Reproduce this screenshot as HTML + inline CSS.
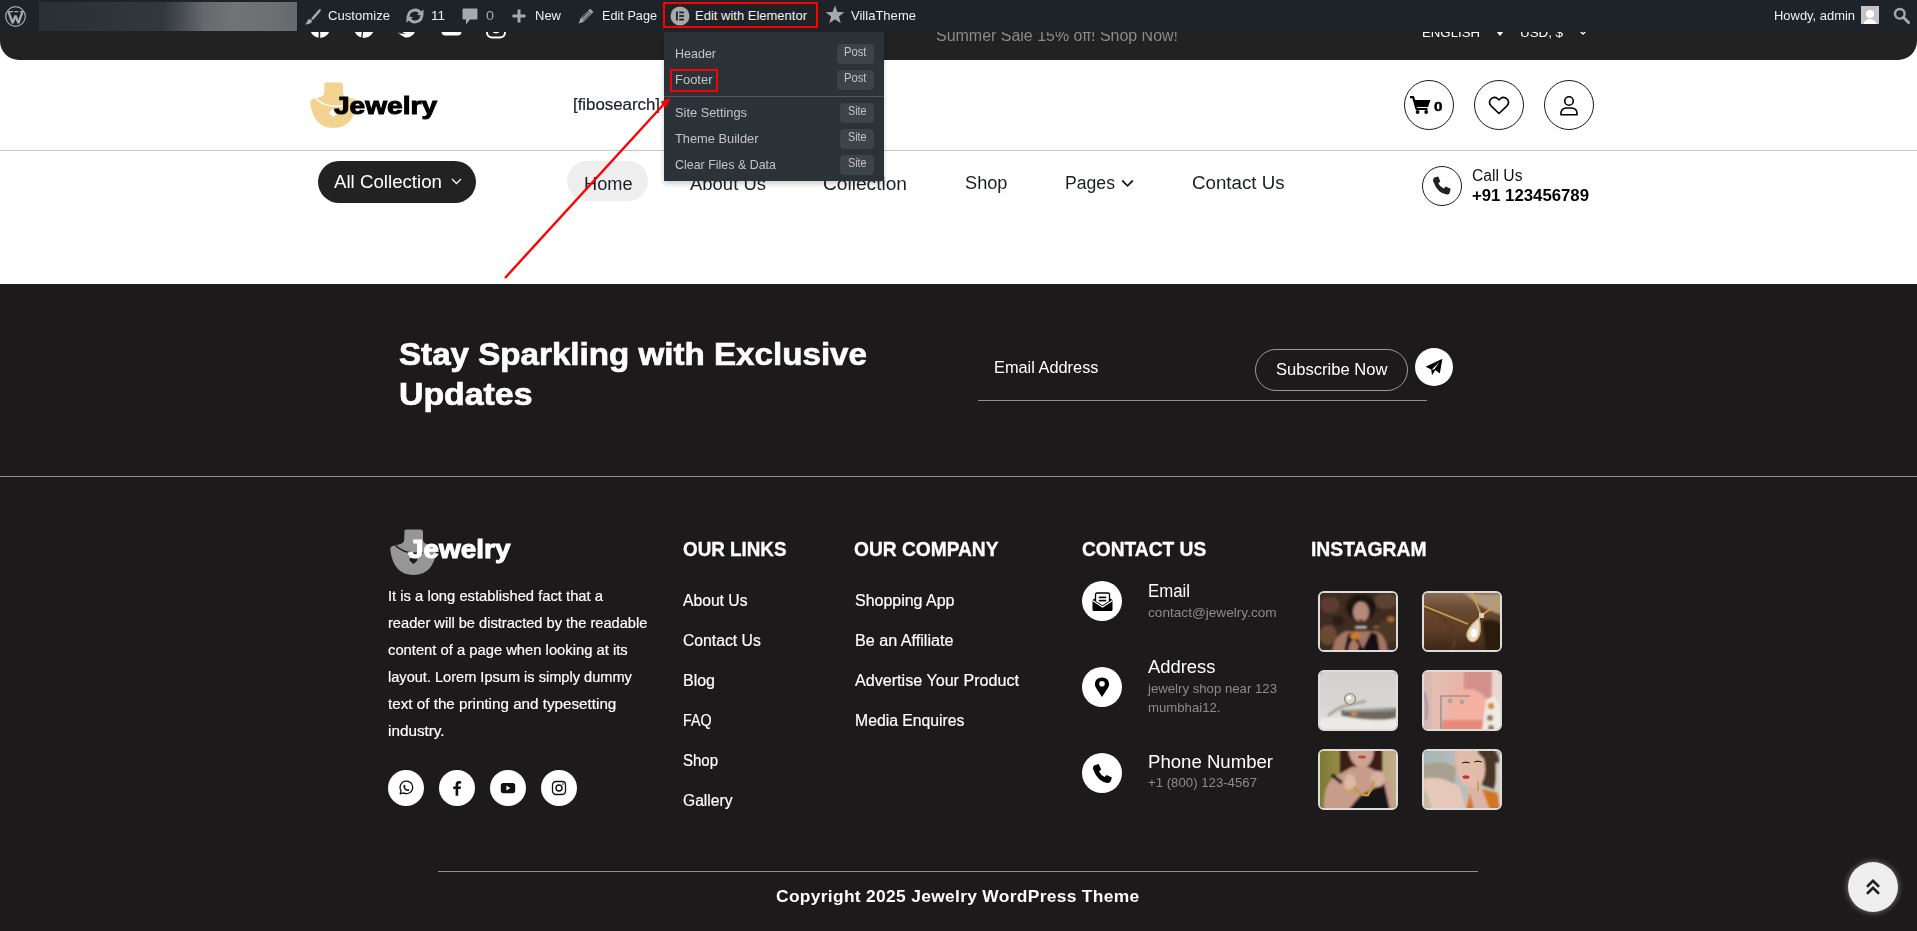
<!DOCTYPE html><html><head><meta charset="utf-8"><style>
*{margin:0;padding:0;box-sizing:border-box}
html,body{width:1917px;height:931px;overflow:hidden;background:#fff;font-family:"Liberation Sans", sans-serif}
.a{position:absolute}
.t{position:absolute;white-space:nowrap;line-height:1;transform-origin:0 50%}
#t0{transform:scaleX(0.9979)}#t1{transform:scaleX(1.0162)}#t2{transform:scaleX(1.0261)}#t3{transform:scaleX(1.0094)}#t4{transform:scaleX(1.0370)}#t5{transform:scaleX(1.1058)}#t6{transform:scaleX(0.9994)}#t7{transform:scaleX(0.9756)}#t8{transform:scaleX(1.0000)}#t9{transform:scaleX(1.0031)}#t10{transform:scaleX(0.9950)}#t11{transform:scaleX(1.1694)}#t12{transform:scaleX(1.0518)}#t13{transform:scaleX(1.2710)}#t14{transform:scaleX(1.0380)}#t15{transform:scaleX(1.0101)}#t16{transform:scaleX(1.0264)}#t17{transform:scaleX(1.0627)}#t18{transform:scaleX(1.0108)}#t19{transform:scaleX(0.9795)}#t20{transform:scaleX(1.0388)}#t21{transform:scaleX(0.9794)}#t22{transform:scaleX(1.0477)}#t23{transform:scaleX(0.9615)}#t24{transform:scaleX(0.9327)}#t25{transform:scaleX(0.9979)}#t26{transform:scaleX(0.9327)}#t27{transform:scaleX(0.9863)}#t28{transform:scaleX(0.8991)}#t29{transform:scaleX(0.9876)}#t30{transform:scaleX(0.8991)}#t31{transform:scaleX(0.9575)}#t32{transform:scaleX(0.8991)}#t33{transform:scaleX(1.0694)}#t34{transform:scaleX(1.0915)}#t35{transform:scaleX(0.9616)}#t36{transform:scaleX(0.9753)}#t37{transform:scaleX(1.1172)}#t38{transform:scaleX(0.9841)}#t39{transform:scaleX(0.9752)}#t40{transform:scaleX(0.9843)}#t41{transform:scaleX(0.9717)}#t42{transform:scaleX(1.0140)}#t43{transform:scaleX(1.0184)}#t44{transform:scaleX(0.9409)}#t45{transform:scaleX(0.9585)}#t46{transform:scaleX(0.9581)}#t47{transform:scaleX(0.9655)}#t48{transform:scaleX(0.9801)}#t49{transform:scaleX(0.9831)}#t50{transform:scaleX(0.9990)}#t51{transform:scaleX(0.8902)}#t52{transform:scaleX(0.9365)}#t53{transform:scaleX(0.9766)}#t54{transform:scaleX(0.9984)}#t55{transform:scaleX(1.0096)}#t56{transform:scaleX(1.0076)}#t57{transform:scaleX(0.9850)}#t58{transform:scaleX(0.9330)}#t59{transform:scaleX(1.0482)}#t60{transform:scaleX(1.0220)}#t61{transform:scaleX(1.0141)}#t62{transform:scaleX(1.0133)}#t63{transform:scaleX(1.0324)}#t64{transform:scaleX(1.0154)}#t65{transform:scaleX(1.0239)}</style></head><body><div class="a" style="left:0px;top:0px;width:1917px;height:60px;background:#222222;border-radius:0 0 19px 19px;"></div>
<svg class="a" style="left:310px;top:18px;" width="20" height="21" viewBox="0 0 20 21"><circle cx="10" cy="10" r="10" fill="#fff"/><rect x="8.6" y="8" width="1.6" height="13" fill="#222"/></svg>
<svg class="a" style="left:354px;top:18px;" width="20" height="21" viewBox="0 0 20 21"><circle cx="10" cy="10" r="10" fill="#fff"/><path d="M9,10 L7.6,21" stroke="#222" stroke-width="1.3"/><path d="M9.5,13 q4,1 6,-3" stroke="#222" stroke-width="1.2" fill="none"/></svg>
<svg class="a" style="left:397px;top:18px;" width="18" height="21" viewBox="0 0 18 21"><path d="M0,13.6 Q3,17 8,19.4 Q13,20 16.4,16.6 Q17.6,15 17.8,13.6 Z" fill="#fff"/><path d="M0,14 Q4,16.6 9,16 Q6,15.4 5.6,14 Z" fill="#222"/></svg>
<svg class="a" style="left:441px;top:18px;" width="21" height="18" viewBox="0 0 21 18"><rect x="0.5" y="2" width="20" height="15.5" rx="4" fill="#fff"/></svg>
<svg class="a" style="left:486px;top:18px;" width="20" height="21" viewBox="0 0 20 21"><rect x="1" y="1" width="18" height="18.5" rx="5" fill="none" stroke="#fff" stroke-width="2"/><circle cx="10" cy="10.5" r="4" fill="none" stroke="#fff" stroke-width="2"/></svg>
<div class="t" id="t0" style="left:936.00px;top:28.45px;font-size:16px;color:#8a8a8a;font-weight:400;">Summer Sale 15% off! Shop Now!</div>
<div class="t" id="t1" style="left:1422.00px;top:25.69px;font-size:13px;color:#ffffff;font-weight:400;">ENGLISH</div>
<svg class="a" style="left:1496px;top:31px;" width="8" height="6" viewBox="0 0 8 6"><path d="M0,0 L8,0 L4,5 Z" fill="#fff"/></svg>
<div class="t" id="t2" style="left:1520.00px;top:25.69px;font-size:13px;color:#ffffff;font-weight:400;">USD, $</div>
<svg class="a" style="left:1578px;top:29px;" width="10" height="8" viewBox="0 0 10 8"><path d="M1,1 L5,5 L9,1" fill="none" stroke="#fff" stroke-width="1.3"/></svg>
<div class="a" style="left:0px;top:0px;width:1917px;height:32px;background:#1d2327;z-index:2;"></div>
<div class="a" style="left:0;top:0;width:1917px;height:32px;z-index:3">
<svg class="a" style="left:5px;top:6px;" width="21" height="21" viewBox="0 0 21 21"><circle cx="10.5" cy="10.5" r="9.8" fill="none" stroke="#a7aaad" stroke-width="1.2"/><path d="M3.6,6.2 L7.6,17 L10.5,9.6 L13.4,17 L17.4,6.2" fill="none" stroke="#a7aaad" stroke-width="2.3" stroke-linejoin="bevel"/><path d="M2.4,5.6 H8 M9.2,5.6 H13.2 M15,5.6 H19" stroke="#a7aaad" stroke-width="1.3"/></svg>
<div class="a" style="left:39px;top:2px;width:258px;height:29px;background:linear-gradient(90deg,#2a2f33 0%,#2f3438 30%,#33383c 48%,#4a4e52 56%,#66696c 64%,#717476 75%,#6e7173 88%,#66696c 100%);"></div>
<svg class="a" style="left:304px;top:8px;" width="18" height="17" viewBox="0 0 18 17"><path d="M16.5,1 Q17.5,2 16,4 L9,12 L7,10.5 L14.5,2 Q15.8,0.5 16.5,1 Z" fill="#a7aaad"/><path d="M6.2,11 L8.2,12.8 Q7.5,16.5 1,16.6 Q3,14.8 3.2,13 Q4,11 6.2,11 Z" fill="#a7aaad"/></svg>
<div class="t" id="t3" style="left:328.00px;top:9.19px;font-size:13px;color:#f0f0f1;font-weight:400;">Customize</div>
<svg class="a" style="left:405px;top:7px;" width="20" height="18" viewBox="0 0 20 18"><path d="M3.4,9 A6.6,6.2 0 0 1 15.6,6" fill="none" stroke="#a7aaad" stroke-width="2.8"/><path d="M18.6,2.6 L18.4,9.6 L12,7.4 Z" fill="#a7aaad"/><path d="M16.6,9 A6.6,6.2 0 0 1 4.4,12" fill="none" stroke="#a7aaad" stroke-width="2.8"/><path d="M1.4,15.4 L1.6,8.4 L8,10.6 Z" fill="#a7aaad"/></svg>
<div class="t" id="t4" style="left:431.00px;top:9.19px;font-size:13px;color:#f0f0f1;font-weight:400;">11</div>
<svg class="a" style="left:462px;top:8px;" width="16" height="17" viewBox="0 0 16 17"><path d="M1.5,0.5 H14.5 Q15.5,0.5 15.5,1.5 V10.5 Q15.5,11.5 14.5,11.5 H8 L4,16.5 V11.5 H1.5 Q0.5,11.5 0.5,10.5 V1.5 Q0.5,0.5 1.5,0.5 Z" fill="#a7aaad"/></svg>
<div class="t" id="t5" style="left:486.00px;top:9.19px;font-size:13px;color:#a7aaad;font-weight:400;">0</div>
<svg class="a" style="left:512px;top:9px;" width="14" height="14" viewBox="0 0 14 14"><rect x="5.5" y="0.5" width="3" height="13" fill="#a7aaad"/><rect x="0.5" y="5.5" width="13" height="3" fill="#a7aaad"/></svg>
<div class="t" id="t6" style="left:535.00px;top:9.19px;font-size:13px;color:#f0f0f1;font-weight:400;">New</div>
<svg class="a" style="left:578px;top:8px;" width="16" height="16" viewBox="0 0 16 16"><path d="M12.2,0.8 L15.4,4 L5.6,13.8 L0.8,15.4 L2.4,10.6 Z" fill="#a7aaad"/><path d="M3.6,10.8 L11.4,3 M5.2,12.4 L13,4.6" stroke="#1d2327" stroke-width="1"/></svg>
<div class="t" id="t7" style="left:602.00px;top:9.19px;font-size:13px;color:#f0f0f1;font-weight:400;">Edit Page</div>
<div class="a" style="left:663px;top:2px;width:155px;height:26px;border:2px solid #f00;"></div>
<svg class="a" style="left:670px;top:6px;" width="20" height="20" viewBox="0 0 20 20"><circle cx="10" cy="10" r="9.5" fill="#a7aaad"/><rect x="6" y="5.5" width="1.8" height="9" fill="#1d2327"/><rect x="9.2" y="5.5" width="4.8" height="1.8" fill="#1d2327"/><rect x="9.2" y="9.1" width="4.8" height="1.8" fill="#1d2327"/><rect x="9.2" y="12.7" width="4.8" height="1.8" fill="#1d2327"/></svg>
<div class="t" id="t8" style="left:695.00px;top:9.19px;font-size:13px;color:#f0f0f1;font-weight:400;">Edit with Elementor</div>
<svg class="a" style="left:825px;top:5px;" width="20" height="19" viewBox="0 0 20 19"><path d="M10,0.5 L12.4,7 L19.3,7.2 L13.9,11.4 L15.8,18.2 L10,14.3 L4.2,18.2 L6.1,11.4 L0.7,7.2 L7.6,7 Z" fill="#a7aaad"/></svg>
<div class="t" id="t9" style="left:851.00px;top:9.19px;font-size:13px;color:#f0f0f1;font-weight:400;">VillaTheme</div>
<div class="t" id="t10" style="left:1774.00px;top:9.19px;font-size:13px;color:#f0f0f1;font-weight:400;">Howdy, admin</div>
<div class="a" style="left:1861px;top:6px;width:18px;height:18px;background:#c3c4c7;overflow:hidden"><div class="a" style="left:5px;top:4px;width:8px;height:8px;border-radius:50%;background:#fff"></div><div class="a" style="left:2px;top:13px;width:14px;height:10px;border-radius:7px 7px 0 0;background:#fff"></div></div>
<svg class="a" style="left:1893px;top:7px;" width="18" height="18" viewBox="0 0 18 18"><circle cx="6.8" cy="6.8" r="4.8" fill="none" stroke="#a7aaad" stroke-width="2.4"/><path d="M10.3,10.3 L15.5,15.5" stroke="#a7aaad" stroke-width="3" stroke-linecap="round"/></svg>
</div>
<svg class="a" style="left:305px;top:78px;" width="56" height="54" viewBox="0 0 56 54"><path d="M19.5,5 Q19.5,4.6 22,4.6 H35.5 Q38,4.6 38,7.5 V14.5 Q38,17.8 41.5,19 L50,21.2 Q52,22 51.5,25 Q48.5,50 28.4,50 Q8.5,50 5.3,25 Q5,22 7,21.2 L15.5,19 Q19.2,17.8 19.2,14.5 Z" fill="#f2d38f"/><path d="M10.5,20.5 Q20,30 38,27.8" fill="none" stroke="#fff" stroke-width="1.6"/><rect x="25.2" y="31.6" width="6.4" height="6.4" transform="rotate(45 28.4 34.8)" rx="1" fill="#fff"/></svg>
<div class="t" id="t11" style="left:334.00px;top:94.28px;font-size:24px;color:#000000;font-weight:900;-webkit-text-stroke:1px #000;">Jewelry</div>
<div class="t" id="t12" style="left:573.00px;top:96.75px;font-size:16px;color:#18202e;font-weight:400;-webkit-text-stroke:0.2px #18202e;">[fibosearch]</div>
<div class="a" style="left:1404px;top:80px;width:50px;height:50px;border:1.5px solid #1a1a1a;border-radius:50%;"></div>
<div class="a" style="left:1474px;top:80px;width:50px;height:50px;border:1.5px solid #1a1a1a;border-radius:50%;"></div>
<div class="a" style="left:1544px;top:80px;width:50px;height:50px;border:1.5px solid #1a1a1a;border-radius:50%;"></div>
<svg class="a" style="left:1409px;top:95px;" width="23" height="20" viewBox="0 0 23 20"><path d="M1,2.2 H4.2 L7.5,14 H18.5" fill="none" stroke="#000" stroke-width="2.2" stroke-linejoin="round"/><path d="M5.5,5 H21.5 L19,12 H7.3 Z" fill="#000"/><circle cx="8.6" cy="17" r="1.9" fill="#000"/><circle cx="17.2" cy="17" r="1.9" fill="#000"/></svg>
<div class="t" id="t13" style="left:1434.00px;top:101.44px;font-size:12px;color:#000;font-weight:700;-webkit-text-stroke:0.4px #000;">0</div>
<svg class="a" style="left:1488px;top:96px;" width="22" height="20" viewBox="0 0 22 20"><path d="M11,17.5 L3,9.8 Q0.3,6.8 2.4,3.6 Q5.6,-0.2 9.6,2.6 L11,4 L12.4,2.6 Q16.4,-0.2 19.6,3.6 Q21.7,6.8 19,9.8 Z" fill="none" stroke="#000" stroke-width="1.6" stroke-linejoin="round"/></svg>
<svg class="a" style="left:1558px;top:95px;" width="22" height="22" viewBox="0 0 22 22"><circle cx="11" cy="6" r="4.3" fill="none" stroke="#000" stroke-width="1.6"/><path d="M3,19.8 Q2.4,13.5 8,13 H14 Q19.6,13.5 19,19.8 Z" fill="none" stroke="#000" stroke-width="1.6" stroke-linejoin="round"/></svg>
<div class="a" style="left:0px;top:150px;width:1917px;height:1px;background:#c8c8c8;"></div>
<div class="a" style="left:318px;top:161px;width:158px;height:42px;background:#222222;border-radius:21px;"></div>
<div class="t" id="t14" style="left:334.00px;top:173.26px;font-size:18px;color:#ffffff;font-weight:400;">All Collection</div>
<svg class="a" style="left:451px;top:178px;" width="11" height="7" viewBox="0 0 11 7"><path d="M1,1 L5.5,5.5 L10,1" fill="none" stroke="#fff" stroke-width="1.3"/></svg>
<div class="a" style="left:567px;top:161px;width:81px;height:40px;background:#eeeeee;border-radius:20px;"></div>
<div class="t" id="t15" style="left:583.50px;top:174.56px;font-size:18px;color:#1b1e22;font-weight:400;">Home</div>
<div class="t" id="t16" style="left:690.00px;top:174.56px;font-size:18px;color:#1b1e22;font-weight:400;">About Us</div>
<div class="t" id="t17" style="left:823.00px;top:174.56px;font-size:18px;color:#1b1e22;font-weight:400;">Collection</div>
<div class="t" id="t18" style="left:964.50px;top:174.26px;font-size:18px;color:#1b1e22;font-weight:400;">Shop</div>
<div class="t" id="t19" style="left:1065.00px;top:174.26px;font-size:18px;color:#1b1e22;font-weight:400;">Pages</div>
<svg class="a" style="left:1121px;top:179px;" width="13" height="9" viewBox="0 0 13 9"><path d="M1.2,1.5 L6.5,6.8 L11.8,1.5" fill="none" stroke="#1c1c1c" stroke-width="1.8"/></svg>
<div class="t" id="t20" style="left:1192.00px;top:174.26px;font-size:18px;color:#1b1e22;font-weight:400;">Contact Us</div>
<div class="a" style="left:1422px;top:166px;width:40px;height:40px;border:1.3px solid #1a1a1a;border-radius:50%;"></div>
<svg class="a" style="left:1432px;top:176px;" width="20" height="20" viewBox="0 0 20 20"><path d="M3.2,1.2 L6.3,0.6 L8.3,5.4 L6.3,7.3 Q7.6,10.6 11.8,12.6 L13.8,10.6 L18.6,12.7 L18,15.9 Q17.6,18.6 14.8,18.4 Q5.8,17.6 1.2,5.4 Q0.5,1.9 3.2,1.2 Z" fill="#222"/></svg>
<div class="t" id="t21" style="left:1472.00px;top:168.25px;font-size:16px;color:#111;font-weight:400;">Call Us</div>
<div class="t" id="t22" style="left:1472.00px;top:187.85px;font-size:16px;color:#000;font-weight:700;">+91 123456789</div>
<div class="a" style="left:664px;top:32px;width:220px;height:149px;background:#2c3338;box-shadow:0 3px 5px rgba(0,0,0,0.2);z-index:4">
<div class="t" id="t23" style="left:10.50px;top:15.19px;font-size:13px;color:#c3c4c7;font-weight:400;">Header</div>
<div class="a" style="left:172.5px;top:12.200000000000003px;width:37.5px;height:19.5px;background:#3c434a;border-radius:4px"></div>
<div class="t" id="t24" style="left:180.00px;top:14.24px;font-size:12px;color:#c3c4c7;font-weight:400;">Post</div>
<div class="t" id="t25" style="left:10.50px;top:41.29px;font-size:13px;color:#c3c4c7;font-weight:400;">Footer</div>
<div class="a" style="left:172.5px;top:38.3px;width:37.5px;height:19.5px;background:#3c434a;border-radius:4px"></div>
<div class="t" id="t26" style="left:180.00px;top:40.34px;font-size:12px;color:#c3c4c7;font-weight:400;">Post</div>
<div class="a" style="left:0;top:64px;width:220px;height:1px;background:#50575e"></div>
<div class="t" id="t27" style="left:10.50px;top:74.19px;font-size:13px;color:#c3c4c7;font-weight:400;">Site Settings</div>
<div class="a" style="left:176px;top:71px;width:34px;height:19.5px;background:#3c434a;border-radius:4px"></div>
<div class="t" id="t28" style="left:183.80px;top:73.04px;font-size:12px;color:#c3c4c7;font-weight:400;">Site</div>
<div class="t" id="t29" style="left:10.50px;top:100.29px;font-size:13px;color:#c3c4c7;font-weight:400;">Theme Builder</div>
<div class="a" style="left:176px;top:97px;width:34px;height:19.5px;background:#3c434a;border-radius:4px"></div>
<div class="t" id="t30" style="left:183.80px;top:99.04px;font-size:12px;color:#c3c4c7;font-weight:400;">Site</div>
<div class="t" id="t31" style="left:10.50px;top:126.19px;font-size:13px;color:#c3c4c7;font-weight:400;">Clear Files &amp; Data</div>
<div class="a" style="left:176px;top:123px;width:34px;height:19.5px;background:#3c434a;border-radius:4px"></div>
<div class="t" id="t32" style="left:183.80px;top:125.04px;font-size:12px;color:#c3c4c7;font-weight:400;">Site</div>
<div class="a" style="left:6px;top:37px;width:48px;height:23px;border:2px solid #f00"></div>
</div>
<svg class="a" style="left:0px;top:0px;z-index:5;" width="1917" height="300" viewBox="0 0 1917 300"><path d="M505,278 L664,104" stroke="#ff0000" stroke-width="2.4" fill="none"/><path d="M670.5,97.5 L660.5,102 L666,108.2 Z" fill="#ff0000"/></svg>
<div class="a" style="left:0px;top:284px;width:1917px;height:647px;background:#1c1a1b;"></div>
<div class="t" id="t33" style="left:398.50px;top:338.75px;font-size:31px;color:#ffffff;font-weight:700;-webkit-text-stroke:0.7px #fff;">Stay Sparkling with Exclusive</div>
<div class="t" id="t34" style="left:398.50px;top:379.35px;font-size:31px;color:#ffffff;font-weight:700;-webkit-text-stroke:0.7px #fff;">Updates</div>
<div class="t" id="t35" style="left:993.50px;top:358.81px;font-size:17px;color:#ffffff;font-weight:400;">Email Address</div>
<div class="a" style="left:978px;top:400px;width:449px;height:1px;background:#8f8f8f;"></div>
<div class="a" style="left:1255px;top:349px;width:153px;height:42px;border:1px solid #9a9a9a;border-radius:21px;"></div>
<div class="t" id="t36" style="left:1276.00px;top:360.61px;font-size:17px;color:#ffffff;font-weight:400;">Subscribe Now</div>
<div class="a" style="left:1415px;top:348px;width:38px;height:38px;background:#fff;border-radius:50%;"></div>
<svg class="a" style="left:1425px;top:358px;" width="18" height="18" viewBox="0 0 18 18"><path d="M0.6,8.8 L17.4,0.8 L14.8,15.4 L10.4,12 L7,17.2 L6.2,11.6 Z" fill="#000"/><path d="M6.8,11.4 L14.6,4 L9.2,11.6 Z" fill="#fff"/></svg>
<div class="a" style="left:0px;top:476px;width:1917px;height:1px;background:#8f8f8f;"></div>
<svg class="a" style="left:384.8px;top:524.8px;" width="56" height="54" viewBox="0 0 56 54"><path d="M19.5,5 Q19.5,4.6 22,4.6 H35.5 Q38,4.6 38,7.5 V14.5 Q38,17.8 41.5,19 L50,21.2 Q52,22 51.5,25 Q48.5,50 28.4,50 Q8.5,50 5.3,25 Q5,22 7,21.2 L15.5,19 Q19.2,17.8 19.2,14.5 Z" fill="#969696"/><path d="M10.5,20.5 Q20,30 38,27.8" fill="none" stroke="#1c1a1b" stroke-width="1.6"/><rect x="25.2" y="31.6" width="6.4" height="6.4" transform="rotate(45 28.4 34.8)" rx="1" fill="#1c1a1b"/></svg>
<div class="t" id="t37" style="left:407.50px;top:537.23px;font-size:25px;color:#ffffff;font-weight:900;-webkit-text-stroke:1px #fff;">Jewelry</div>
<div class="t" id="t38" style="left:388.20px;top:588.30px;font-size:15px;color:#ffffff;font-weight:400;-webkit-text-stroke:0.2px #fff;">It is a long established fact that a</div>
<div class="t" id="t39" style="left:388.20px;top:615.30px;font-size:15px;color:#ffffff;font-weight:400;-webkit-text-stroke:0.2px #fff;">reader will be distracted by the readable</div>
<div class="t" id="t40" style="left:388.20px;top:642.30px;font-size:15px;color:#ffffff;font-weight:400;-webkit-text-stroke:0.2px #fff;">content of a page when looking at its</div>
<div class="t" id="t41" style="left:388.20px;top:669.30px;font-size:15px;color:#ffffff;font-weight:400;-webkit-text-stroke:0.2px #fff;">layout. Lorem Ipsum is simply dummy</div>
<div class="t" id="t42" style="left:388.20px;top:696.30px;font-size:15px;color:#ffffff;font-weight:400;-webkit-text-stroke:0.2px #fff;">text of the printing and typesetting</div>
<div class="t" id="t43" style="left:388.20px;top:723.30px;font-size:15px;color:#ffffff;font-weight:400;-webkit-text-stroke:0.2px #fff;">industry.</div>
<div class="a" style="left:388px;top:770px;width:36px;height:36px;background:#fff;border-radius:50%;"></div>
<div class="a" style="left:439px;top:770px;width:36px;height:36px;background:#fff;border-radius:50%;"></div>
<div class="a" style="left:490px;top:770px;width:36px;height:36px;background:#fff;border-radius:50%;"></div>
<div class="a" style="left:541px;top:770px;width:36px;height:36px;background:#fff;border-radius:50%;"></div>
<svg class="a" style="left:398px;top:780px;" width="16" height="16" viewBox="0 0 16 16"><path d="M2.2,13.8 L3,10.6 A6.3,6.3 0 1 1 5.4,12.9 Z" fill="none" stroke="#111" stroke-width="1.3" stroke-linejoin="round"/><path d="M5.6,5 Q6.4,4.2 7,5.2 L7.6,6.4 Q7.6,7 7,7.4 Q7.8,9 9.2,9.6 Q9.7,9 10.2,9 L11.3,9.7 Q11.6,10.5 10.6,11 Q8.6,11.4 6.6,9.4 Q4.8,7.2 5.6,5 Z" fill="#111"/></svg>
<svg class="a" style="left:450px;top:780px;" width="14" height="16" viewBox="0 0 14 16"><path d="M8.2,15.8 V9 H10.6 L11,6.6 H8.2 V5.2 Q8.2,3.6 9.8,3.6 H11.2 V1.3 Q10.4,1 9,1 Q5.6,1 5.6,4.6 V6.6 H3.2 V9 H5.6 V15.8 Z" fill="#111"/></svg>
<svg class="a" style="left:500px;top:781px;" width="16" height="14" viewBox="0 0 16 14"><rect x="0.8" y="2" width="14.4" height="10.2" rx="2.6" fill="#111"/><path d="M6.4,4.8 L10.4,7.1 L6.4,9.4 Z" fill="#fff"/></svg>
<svg class="a" style="left:551px;top:780px;" width="16" height="16" viewBox="0 0 16 16"><rect x="1.5" y="1.5" width="13" height="13" rx="3.4" fill="none" stroke="#111" stroke-width="1.3"/><circle cx="8" cy="8" r="3" fill="none" stroke="#111" stroke-width="1.4"/><circle cx="11.9" cy="4.1" r="0.8" fill="#111"/></svg>
<div class="t" id="t44" style="left:683.40px;top:538.87px;font-size:20px;color:#ffffff;font-weight:700;-webkit-text-stroke:0.35px #fff;">OUR LINKS</div>
<div class="t" id="t45" style="left:854.00px;top:538.87px;font-size:20px;color:#ffffff;font-weight:700;-webkit-text-stroke:0.35px #fff;">OUR COMPANY</div>
<div class="t" id="t46" style="left:1082.30px;top:538.87px;font-size:20px;color:#ffffff;font-weight:700;-webkit-text-stroke:0.35px #fff;">CONTACT US</div>
<div class="t" id="t47" style="left:1310.60px;top:538.87px;font-size:20px;color:#ffffff;font-weight:700;-webkit-text-stroke:0.35px #fff;">INSTAGRAM</div>
<div class="t" id="t48" style="left:683.40px;top:592.55px;font-size:16px;color:#ffffff;font-weight:400;-webkit-text-stroke:0.2px #fff;">About Us</div>
<div class="t" id="t49" style="left:683.40px;top:632.55px;font-size:16px;color:#ffffff;font-weight:400;-webkit-text-stroke:0.2px #fff;">Contact Us</div>
<div class="t" id="t50" style="left:683.40px;top:672.55px;font-size:16px;color:#ffffff;font-weight:400;-webkit-text-stroke:0.2px #fff;">Blog</div>
<div class="t" id="t51" style="left:683.40px;top:712.55px;font-size:16px;color:#ffffff;font-weight:400;-webkit-text-stroke:0.2px #fff;">FAQ</div>
<div class="t" id="t52" style="left:683.40px;top:752.55px;font-size:16px;color:#ffffff;font-weight:400;-webkit-text-stroke:0.2px #fff;">Shop</div>
<div class="t" id="t53" style="left:683.40px;top:792.55px;font-size:16px;color:#ffffff;font-weight:400;-webkit-text-stroke:0.2px #fff;">Gallery</div>
<div class="t" id="t54" style="left:854.50px;top:592.55px;font-size:16px;color:#ffffff;font-weight:400;-webkit-text-stroke:0.2px #fff;">Shopping App</div>
<div class="t" id="t55" style="left:854.50px;top:632.55px;font-size:16px;color:#ffffff;font-weight:400;-webkit-text-stroke:0.2px #fff;">Be an Affiliate</div>
<div class="t" id="t56" style="left:854.50px;top:672.55px;font-size:16px;color:#ffffff;font-weight:400;-webkit-text-stroke:0.2px #fff;">Advertise Your Product</div>
<div class="t" id="t57" style="left:854.50px;top:712.55px;font-size:16px;color:#ffffff;font-weight:400;-webkit-text-stroke:0.2px #fff;">Media Enquires</div>
<div class="a" style="left:1082px;top:581px;width:40px;height:40px;background:#fff;border-radius:50%;"></div>
<div class="a" style="left:1082px;top:667px;width:40px;height:40px;background:#fff;border-radius:50%;"></div>
<div class="a" style="left:1082px;top:753px;width:40px;height:40px;background:#fff;border-radius:50%;"></div>
<svg class="a" style="left:1092px;top:590px;" width="21" height="22" viewBox="0 0 21 22"><path d="M0.5,10 L10.5,3 L20.5,10 V19.5 Q20.5,21 19,21 H2 Q0.5,21 0.5,19.5 Z" fill="#000"/><path d="M3.5,11.5 V4.5 Q3.5,3 5,3 H16 Q17.5,3 17.5,4.5 V11.5 L10.5,16 Z" fill="#fff" stroke="#000" stroke-width="1.3"/><rect x="6.8" y="6.6" width="7.4" height="1.6" fill="#000"/><rect x="6.8" y="9.8" width="7.4" height="1.6" fill="#000"/><path d="M0.5,10.5 L10.5,17 L20.5,10.5" fill="none" stroke="#fff" stroke-width="1.2"/></svg>
<svg class="a" style="left:1094px;top:677px;" width="16" height="21" viewBox="0 0 16 21"><path d="M8,20 L2.4,11.6 Q0.6,9 0.9,6.6 Q1.6,0.6 8,0.5 Q14.4,0.6 15.1,6.6 Q15.4,9 13.6,11.6 Z" fill="#000"/><circle cx="8" cy="6.8" r="2.8" fill="#fff"/></svg>
<svg class="a" style="left:1092px;top:763px;" width="21" height="21" viewBox="0 0 21 21"><path d="M3.6,2 L6.6,1.1 L9.2,6.4 L7,8.4 Q8.6,11.8 12.6,14 L14.6,11.9 L19.9,14.4 L19,17.6 Q18.4,20.2 15.6,19.9 Q5.6,18.7 1.1,6.2 Q0.4,2.8 3.6,2 Z" fill="#000"/></svg>
<div class="t" id="t58" style="left:1147.70px;top:581.86px;font-size:18px;color:#ffffff;font-weight:400;">Email</div>
<div class="t" id="t59" style="left:1147.70px;top:606.19px;font-size:13px;color:#8c8c8c;font-weight:400;">contact@jewelry.com</div>
<div class="t" id="t60" style="left:1147.70px;top:657.66px;font-size:18px;color:#ffffff;font-weight:400;">Address</div>
<div class="t" id="t61" style="left:1147.70px;top:681.99px;font-size:13px;color:#8c8c8c;font-weight:400;">jewelry shop near 123</div>
<div class="t" id="t62" style="left:1147.70px;top:701.09px;font-size:13px;color:#8c8c8c;font-weight:400;">mumbhai12.</div>
<div class="t" id="t63" style="left:1147.70px;top:753.46px;font-size:18px;color:#ffffff;font-weight:400;">Phone Number</div>
<div class="t" id="t64" style="left:1147.70px;top:775.99px;font-size:13px;color:#8c8c8c;font-weight:400;">+1 (800) 123-4567</div>
<svg width="0" height="0" style="position:absolute"><defs><filter id="bl" x="-10%" y="-10%" width="120%" height="120%"><feGaussianBlur stdDeviation="1.1"/></filter><linearGradient id="g2" x1="0" y1="0" x2="0" y2="1"><stop offset="0" stop-color="#8a7058"/><stop offset="0.3" stop-color="#6a4a30"/><stop offset="0.7" stop-color="#5a3a24"/><stop offset="1" stop-color="#3a2414"/></linearGradient><linearGradient id="g3" x1="0" y1="0" x2="0" y2="1"><stop offset="0" stop-color="#d4d2ce"/><stop offset="0.6" stop-color="#d8d6d2"/><stop offset="1" stop-color="#e6e4e0"/></linearGradient><linearGradient id="g4" x1="0" y1="0" x2="1" y2="0"><stop offset="0" stop-color="#e2c2b4"/><stop offset="0.5" stop-color="#e8b4a8"/><stop offset="1" stop-color="#e0a8a0"/></linearGradient><linearGradient id="g5" x1="0" y1="0" x2="1" y2="0"><stop offset="0" stop-color="#7a7a30"/><stop offset="0.5" stop-color="#a89a60"/><stop offset="1" stop-color="#c0b08a"/></linearGradient><linearGradient id="g6" x1="0" y1="0" x2="1" y2="0"><stop offset="0" stop-color="#a8b4b4"/><stop offset="1" stop-color="#c4c8c4"/></linearGradient></defs></svg>
<div class="a" style="left:1318px;top:591px;width:80px;height:61px;border:2px solid #dcdcdc;border-radius:6px;overflow:hidden;background:#444"><svg width="76" height="57" viewBox="2 2 76 57" preserveAspectRatio="none" style="display:block"><rect width="80" height="61" fill="#3e2c22"/><g filter="url(#bl)"><ellipse cx="12" cy="14" rx="10" ry="8" fill="#5a3e2e"/><ellipse cx="68" cy="10" rx="12" ry="8" fill="#5c4230"/><ellipse cx="10" cy="44" rx="9" ry="10" fill="#6a4a36"/><ellipse cx="70" cy="40" rx="10" ry="12" fill="#4e3828"/><ellipse cx="73" cy="28" rx="4" ry="3" fill="#a8682c"/><ellipse cx="58" cy="36" rx="3" ry="2" fill="#7a5a30"/><ellipse cx="20" cy="30" rx="6" ry="5" fill="#2a1c16"/><ellipse cx="43" cy="16" rx="15" ry="13" fill="#1e1410"/><ellipse cx="43" cy="21" rx="8" ry="10.5" fill="#b68878"/><path d="M14,61 Q16,44 28,40 L58,40 Q68,44 70,61 Z" fill="#a47462"/><path d="M26,61 L30,43 L36,41 L45,58 L53,41 L59,43 L62,61 Z" fill="#121012"/><rect x="37" y="35" width="12" height="2.6" rx="1.2" fill="#c8ccd0"/><ellipse cx="37" cy="45" rx="5" ry="3.5" fill="#d0802c"/><path d="M30,61 Q31,50 36,48 L41,54 L39,61 Z" fill="#a87a66"/><ellipse cx="43" cy="30" rx="2.8" ry="1.4" fill="#6a2228"/></g></svg></div>
<div class="a" style="left:1422px;top:591px;width:80px;height:61px;border:2px solid #dcdcdc;border-radius:6px;overflow:hidden;background:#444"><svg width="76" height="57" viewBox="2 2 76 57" preserveAspectRatio="none" style="display:block"><rect width="80" height="61" fill="url(#g2)"/><g filter="url(#bl)"><path d="M40,0 Q62,6 80,2 V24 Q66,20 54,12 Q46,6 40,0 Z" fill="#b09a80"/><path d="M60,30 Q72,26 80,34 V61 H64 Z" fill="#2a1a10"/><path d="M2,16 Q20,22 30,38 Q36,48 30,58" fill="none" stroke="#5a3a22" stroke-width="3"/></g><path d="M2,15 Q24,24 46,33" fill="none" stroke="#c8a04a" stroke-width="1.8"/><path d="M50,2 L59,24" fill="none" stroke="#c8a04a" stroke-width="1.8"/><path d="M78,10 Q70,18 60,24" fill="none" stroke="#c8a04a" stroke-width="1.8"/><rect x="57" y="22" width="5" height="5" fill="#d8d0c0"/><path d="M57,27 Q44,38 45,45 Q47,52 53,50 Q59,46 58,34 Z" fill="#e6dccb" stroke="#d0b070" stroke-width="1.5"/><ellipse cx="52" cy="42" rx="3" ry="4" fill="#fff"/></svg></div>
<div class="a" style="left:1318px;top:670px;width:80px;height:61px;border:2px solid #dcdcdc;border-radius:6px;overflow:hidden;background:#444"><svg width="76" height="57" viewBox="2 2 76 57" preserveAspectRatio="none" style="display:block"><rect width="80" height="61" fill="url(#g3)"/><g filter="url(#bl)"><path d="M0,50 Q20,44 40,50 Q60,54 80,48 V61 H0 Z" fill="#eceae8"/><path d="M23,40 L78,38 L78,48 Q60,52 24,46 Z" fill="#6e6862"/><path d="M26,41 L76,40" stroke="#c8c4c0" stroke-width="1.2"/><ellipse cx="36" cy="44" rx="3" ry="1.8" fill="#e09040"/><path d="M10,46 Q16,40 26,36 L48,31" fill="none" stroke="#9a9690" stroke-width="2.2"/></g><circle cx="32" cy="29" r="5.5" fill="#d8d4cc" stroke="#8a847c" stroke-width="1.2"/><circle cx="31" cy="28" r="2" fill="#ffffff"/></svg></div>
<div class="a" style="left:1422px;top:670px;width:80px;height:61px;border:2px solid #dcdcdc;border-radius:6px;overflow:hidden;background:#444"><svg width="76" height="57" viewBox="2 2 76 57" preserveAspectRatio="none" style="display:block"><rect width="80" height="61" fill="url(#g4)"/><g filter="url(#bl)"><rect x="42" y="0" width="28" height="28" fill="#d4908a"/><rect x="70" y="0" width="10" height="61" fill="#e8d8d0"/><rect x="0" y="0" width="10" height="61" fill="#d8b8b0"/><ellipse cx="46" cy="37" rx="20" ry="18" fill="#f4b0a0"/><path d="M20,50 H62 V61 H20 Z" fill="#e88a78"/><path d="M64,30 L72,26 L80,40 V61 H60 Z" fill="#f2eae4"/><circle cx="69" cy="36" r="3.2" fill="#c8902c"/><circle cx="68" cy="48" r="3" fill="#8a7060"/><circle cx="69" cy="58" r="3" fill="#9a6a3a"/><path d="M2,22 Q6,36 4,50" stroke="#9a80a0" stroke-width="2" fill="none"/></g><path d="M19,61 V26 H48" fill="none" stroke="#808080" stroke-width="1.1"/><circle cx="28" cy="31" r="2.4" fill="#a8a8a0"/><circle cx="40" cy="32" r="2.4" fill="#a8a8a0"/></svg></div>
<div class="a" style="left:1318px;top:749px;width:80px;height:61px;border:2px solid #dcdcdc;border-radius:6px;overflow:hidden;background:#444"><svg width="76" height="57" viewBox="2 2 76 57" preserveAspectRatio="none" style="display:block"><rect width="80" height="61" fill="url(#g5)"/><g filter="url(#bl)"><path d="M22,0 H64 V26 L50,22 H34 L22,26 Z" fill="#3e1c16"/><path d="M30,0 H56 Q56,16 44,20 Q32,16 30,0 Z" fill="#d0a492"/><path d="M6,61 Q4,34 20,26 L34,18 H50 L66,26 Q76,34 76,61 Z" fill="#c89c8c"/><path d="M14,26 L24,34" stroke="#111" stroke-width="3"/><path d="M30,61 L42,47 L66,34 L72,61 Z" fill="#141214"/><ellipse cx="32" cy="34" rx="6" ry="9" fill="#dcb8a8"/><ellipse cx="60" cy="30" rx="7" ry="8" fill="#d6b0a0"/><path d="M26,42 Q30,44 36,40" stroke="#c8a050" stroke-width="3" fill="none"/></g><path d="M36,38 Q44,48 50,46 Q54,40 56,32" stroke="#c89a3a" stroke-width="2.4" fill="none"/><ellipse cx="44" cy="8" rx="4" ry="1.6" fill="#b84a3e"/></svg></div>
<div class="a" style="left:1422px;top:749px;width:80px;height:61px;border:2px solid #dcdcdc;border-radius:6px;overflow:hidden;background:#444"><svg width="76" height="57" viewBox="2 2 76 57" preserveAspectRatio="none" style="display:block"><rect width="80" height="61" fill="url(#g6)"/><g filter="url(#bl)"><path d="M0,16 Q20,10 34,18 L30,61 H0 Z" fill="#a8a090"/><path d="M0,30 Q14,26 30,34 V61 H0 Z" fill="#c8baa0"/><path d="M56,0 H72 Q80,10 76,22 L72,40 L60,36 Z" fill="#4a3428"/><path d="M74,14 V61 H80 V14 Z" fill="#d8d0c0"/><path d="M34,2 Q52,-2 62,10 Q66,30 56,38 Q46,42 38,32 Q32,20 34,2 Z" fill="#e2bcaa"/><path d="M2,30 Q20,26 38,38 L44,61 H10 Q6,44 2,40 Z" fill="#e6c8b8"/><path d="M46,40 Q60,36 74,50 L76,61 H44 Z" fill="#dcb4a4"/><path d="M60,40 L76,44 L78,61 H68 Z" fill="#d47420"/><path d="M48,44 L44,61 H52 Z" fill="#d47420"/></g><ellipse cx="44" cy="28" rx="3.5" ry="1.8" fill="#c0303c"/><path d="M56,32 V42" stroke="#d0a030" stroke-width="1.8"/><path d="M40,14 Q44,12 48,14 M52,13 Q56,11 60,13" stroke="#3a2a20" stroke-width="1"/></svg></div>
<div class="a" style="left:438px;top:871px;width:1040px;height:1px;background:#8f8f8f;"></div>
<div class="t" id="t65" style="left:776.00px;top:887.61px;font-size:17px;color:#ffffff;font-weight:700;letter-spacing:0.3px;">Copyright 2025 Jewelry WordPress Theme</div>
<div class="a" style="left:1848px;top:862px;width:50px;height:50px;background:#eeeeee;border-radius:50%;box-shadow:0 0 6px rgba(255,255,255,0.45);"></div>
<svg class="a" style="left:1866px;top:878px;" width="14" height="18" viewBox="0 0 14 18"><path d="M1.8,8 L7,2.8 L12.2,8" fill="none" stroke="#222" stroke-width="2.6" stroke-linecap="round"/><path d="M1.8,15 L7,9.8 L12.2,15" fill="none" stroke="#222" stroke-width="2.6" stroke-linecap="round"/></svg></body></html>
